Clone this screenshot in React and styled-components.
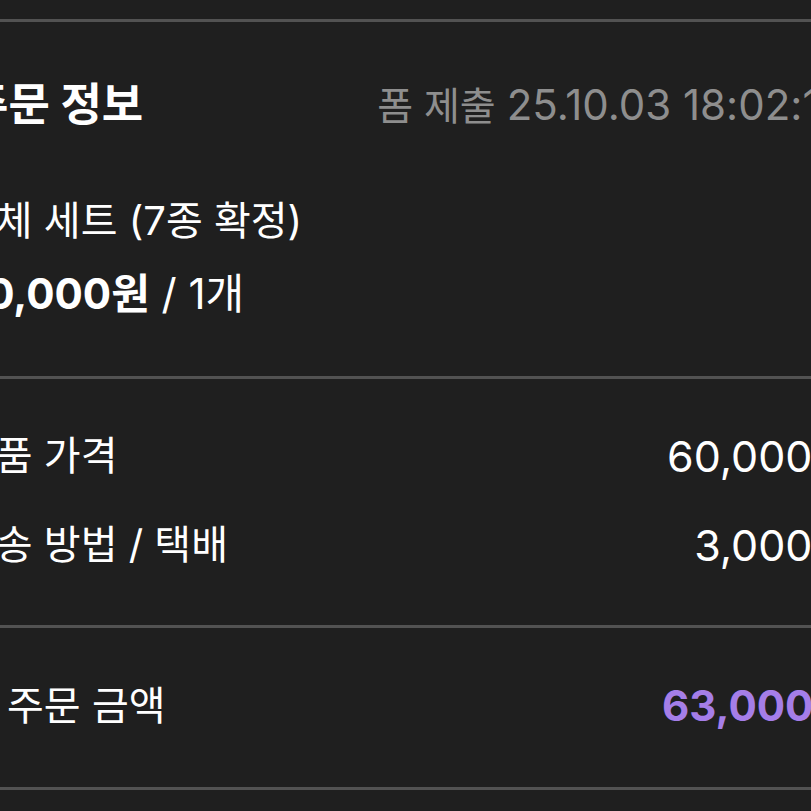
import React from 'react';
import styled, { createGlobalStyle } from 'styled-components';

const GlobalStyle = createGlobalStyle`
    html, body {
        margin: 0;
        padding: 0;
        background-color: #1f1f1f;
        overflow: hidden;
    }
    body {
        font-family: Inter, "Noto Sans CJK KR", sans-serif;
        color: #ffffff;
    }
`;

const Viewport = styled.div`
    width: 811px;
    height: 811px;
    overflow: hidden;
    background-color: #1f1f1f;
`;

// 화면보다 넓은 원본 카드 (좌우가 잘려 보임)
const Card = styled.div`
    width: 893px;
    margin-left: -41px;
    padding-top: 19px;
`;

const Section = styled.section`
    border-top: 3px solid #525252;
    padding: ${({ $pt }) => $pt}px 0 ${({ $pb }) => $pb}px;
`;

const HeaderRow = styled.div`
    display: flex;
    justify-content: space-between;
    align-items: center;
    height: 50px;
    padding-right: 7px;
`;

const Title = styled.h2`
    margin: 0 0 0 8px;
    font-size: 45px;
    font-weight: 700;
    line-height: 50px;
`;

const SubmittedAt = styled.span`
    font-size: 39px;
    line-height: 50px;
    color: #8e8e8e;
    white-space: nowrap;

    time {
        font-size: 42px;
    }
`;

const ProductName = styled.p`
    margin: 66px 0 0;
    font-size: 40px;
    line-height: 50px;
`;

const ProductPrice = styled.p`
    margin: 23px 0 0;
    font-size: 42px;
    line-height: 50px;

    strong {
        font-weight: 700;
    }
`;

const Row = styled.div`
    display: flex;
    justify-content: space-between;
    align-items: center;
    height: 50px;
    font-size: 40px;
    line-height: 50px;
    margin-top: ${({ $mt }) => $mt || 0}px;
`;

const Value = styled.span`
    font-size: ${({ $accent }) => ($accent ? 42 : 43)}px;
    color: ${({ $accent }) => ($accent ? '#a57ee8' : '#ffffff')};
    font-weight: ${({ $accent }) => ($accent ? 700 : 400)};
`;

export default function App() {
    return (
        <Viewport>
            <GlobalStyle />
            <Card>
                <Section $pt={58} $pb={57}>
                    <HeaderRow>
                        <Title>주문 정보</Title>
                        <SubmittedAt>
                            폼 제출 <time>25.10.03 18:02:15</time>
                        </SubmittedAt>
                    </HeaderRow>
                    <ProductName>전체 세트 (7종 확정)</ProductName>
                    <ProductPrice>
                        <strong>60,000원</strong> / 1개
                    </ProductPrice>
                </Section>
                <Section $pt={52} $pb={55}>
                    <Row>
                        <span>상품 가격</span>
                        <Value>60,000원</Value>
                    </Row>
                    <Row $mt={39}>
                        <span>배송 방법 / 택배</span>
                        <Value>3,000원</Value>
                    </Row>
                </Section>
                <Section $pt={53} $pb={56}>
                    <Row>
                        <span>총 주문 금액</span>
                        <Value $accent>63,000원</Value>
                    </Row>
                </Section>
                <Section $pt={0} $pb={40} />
            </Card>
        </Viewport>
    );
}
